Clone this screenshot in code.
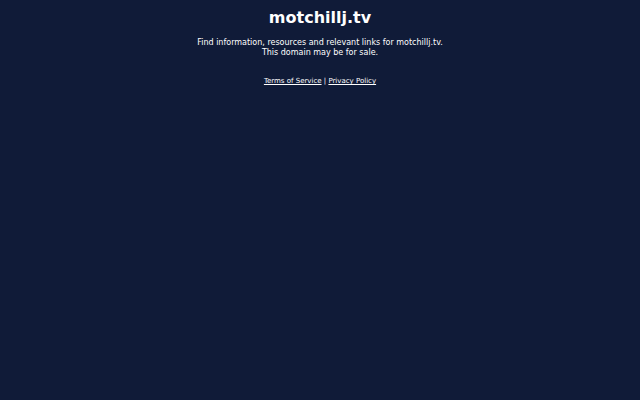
export default function App() {
  return (
    <div className="min-h-screen bg-[#101b38] text-white text-center" style={{ fontFamily: '"DejaVu Sans", sans-serif' }}>
      <div className="pt-[8px]">
        <h1 className="text-[16px] font-bold leading-[19px]">motchillj.tv</h1>
        <p className="mt-[11px] text-[8px] leading-[10px]">
          Find information, resources and relevant links for motchillj.tv.
          <br />
          This domain may be for sale.
        </p>
        <p className="mt-[19px] text-[7px] leading-[9px]">
          <a href="#" className="underline">Terms of Service</a> | <a href="#" className="underline">Privacy Policy</a>
        </p>
      </div>
    </div>
  );
}
